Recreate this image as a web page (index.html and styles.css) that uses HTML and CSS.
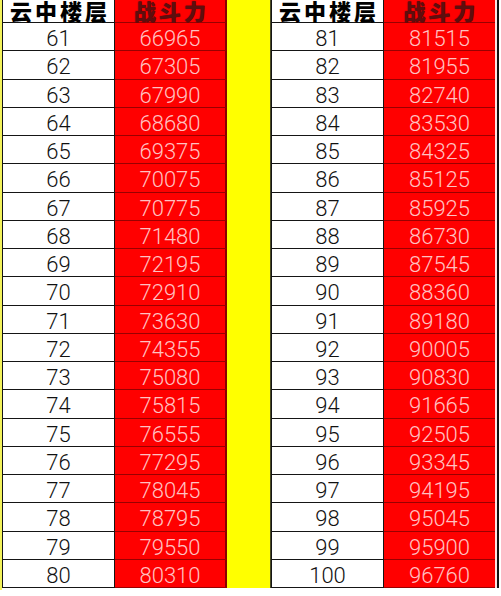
FILE: index.html
```html
<!DOCTYPE html>
<html lang="zh">
<head>
<meta charset="utf-8">
<title>云中楼层 战斗力</title>
<link rel="stylesheet" href="styles.css">
</head>
<body>
<div class="sheet">
  <div class="edge"></div>
  <div class="half">
    <div class="cell head floor">云中楼层</div>
    <div class="cell head power">战斗力</div>
    <div class="cell floor">61</div><div class="cell power">66965</div>
    <div class="cell floor">62</div><div class="cell power">67305</div>
    <div class="cell floor">63</div><div class="cell power">67990</div>
    <div class="cell floor">64</div><div class="cell power">68680</div>
    <div class="cell floor">65</div><div class="cell power">69375</div>
    <div class="cell floor">66</div><div class="cell power">70075</div>
    <div class="cell floor">67</div><div class="cell power">70775</div>
    <div class="cell floor">68</div><div class="cell power">71480</div>
    <div class="cell floor">69</div><div class="cell power">72195</div>
    <div class="cell floor">70</div><div class="cell power">72910</div>
    <div class="cell floor">71</div><div class="cell power">73630</div>
    <div class="cell floor">72</div><div class="cell power">74355</div>
    <div class="cell floor">73</div><div class="cell power">75080</div>
    <div class="cell floor">74</div><div class="cell power">75815</div>
    <div class="cell floor">75</div><div class="cell power">76555</div>
    <div class="cell floor">76</div><div class="cell power">77295</div>
    <div class="cell floor">77</div><div class="cell power">78045</div>
    <div class="cell floor">78</div><div class="cell power">78795</div>
    <div class="cell floor">79</div><div class="cell power">79550</div>
    <div class="cell floor">80</div><div class="cell power">80310</div>
  </div>
  <div class="band"></div>
  <div class="half right">
    <div class="cell head floor">云中楼层</div>
    <div class="cell head power">战斗力</div>
    <div class="cell floor">81</div><div class="cell power">81515</div>
    <div class="cell floor">82</div><div class="cell power">81955</div>
    <div class="cell floor">83</div><div class="cell power">82740</div>
    <div class="cell floor">84</div><div class="cell power">83530</div>
    <div class="cell floor">85</div><div class="cell power">84325</div>
    <div class="cell floor">86</div><div class="cell power">85125</div>
    <div class="cell floor">87</div><div class="cell power">85925</div>
    <div class="cell floor">88</div><div class="cell power">86730</div>
    <div class="cell floor">89</div><div class="cell power">87545</div>
    <div class="cell floor">90</div><div class="cell power">88360</div>
    <div class="cell floor">91</div><div class="cell power">89180</div>
    <div class="cell floor">92</div><div class="cell power">90005</div>
    <div class="cell floor">93</div><div class="cell power">90830</div>
    <div class="cell floor">94</div><div class="cell power">91665</div>
    <div class="cell floor">95</div><div class="cell power">92505</div>
    <div class="cell floor">96</div><div class="cell power">93345</div>
    <div class="cell floor">97</div><div class="cell power">94195</div>
    <div class="cell floor">98</div><div class="cell power">95045</div>
    <div class="cell floor">99</div><div class="cell power">95900</div>
    <div class="cell floor">100</div><div class="cell power">96760</div>
  </div>
  <div class="tail"></div>
</div>
</body>
</html>
```
FILE: styles.css
```css
html, body {
  margin: 0;
  padding: 0;
  background: #ffffff;
}
body {
  width: 501px;
  height: 596px;
  overflow: hidden;
}
.sheet {
  display: flex;
  align-items: flex-start;
  width: 501px;
}
.edge {
  width: 2px;
  height: 590px;
  background: #f2f25a;
  flex: none;
}
.half {
  flex: none;
  display: grid;
  grid-template-columns: 112px 112px;
  grid-template-rows: 23px repeat(20, 28.25px);
  border-left: 1px solid #151515;
}
.half.right {
  grid-template-columns: 112px 111px;
}
.band {
  flex: none;
  width: 43px;
  height: 588px;
  background: #ffff00;
  border-right: 1px solid #4a4a20;
}
.tail {
  flex: none;
  width: 2px;
  height: 588px;
  background: #fbe3e3;
  border-right: 2px solid #111111;
}
.cell {
  box-sizing: border-box;
  display: flex;
  align-items: center;
  justify-content: center;
  font-family: Roboto, "Liberation Sans", sans-serif;
  font-weight: 300;
  font-size: 22px;
  padding-top: 4px;
  white-space: nowrap;
}
.floor {
  background: #ffffff;
  color: #111111;
  border-right: 1px solid #151515;
  border-bottom: 1px solid #151515;
}
.power {
  background: #ff0000;
  color: #ffc2c2;
  border-bottom: 1px solid #9a0000;
}
.half > .power {
  border-right: 2px solid #8a0000;
}
.half.right > .power {
  border-right: none;
}
.head {
  font-family: "Noto Sans CJK SC", sans-serif;
  font-weight: 900;
  font-size: 22px;
  line-height: 23px;
  letter-spacing: 3px;
  padding: 0 0 1px 3px;
  align-items: center;
}
.head.floor {
  color: #000000;
}
.head.power {
  color: #5e0e0e;
  text-shadow: 0 0 1px #4a0000;
}
```
